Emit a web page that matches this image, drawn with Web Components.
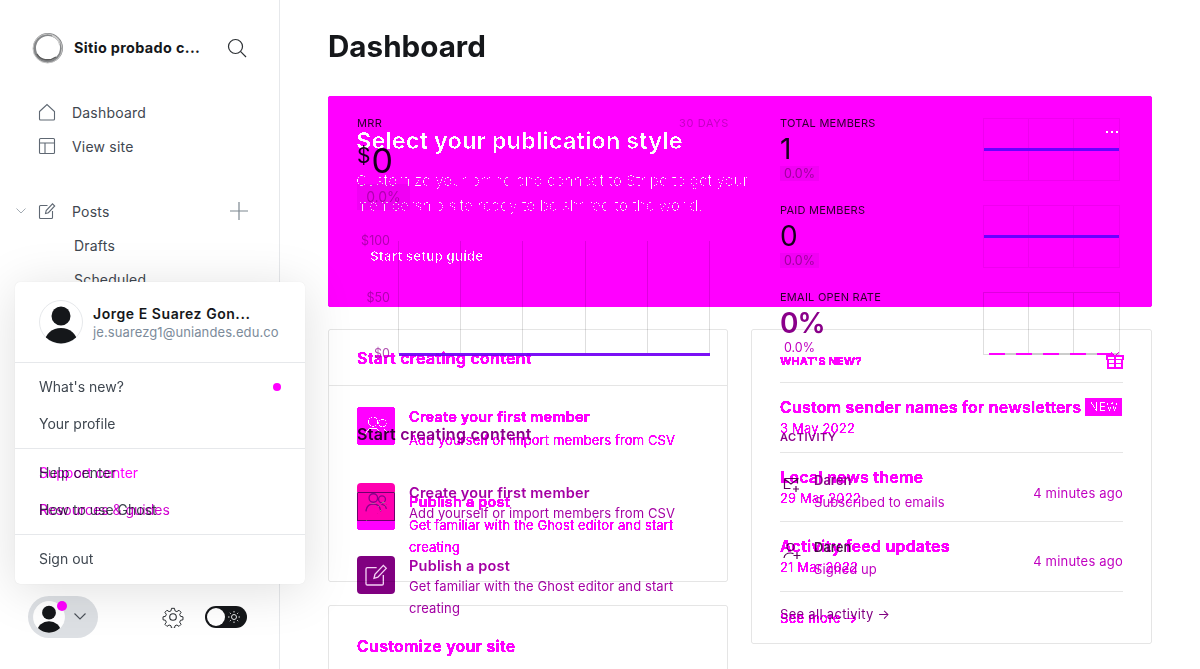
<!DOCTYPE html>
<html lang="en">
<head>
<meta charset="utf-8">
<title>Dashboard</title>
<style>
    html, body { margin: 0; height: 100%; background: #fff; overflow: hidden; }
    body { font-family: Inter, "Liberation Sans", sans-serif; display: flex; }
</style>
</head>
<body>
<side-bar></side-bar>
<main-stage></main-stage>

<script>
    const ICON = {
        home: '<path d="M1.5 8.5 9 1.5l7.5 7v7.5a1 1 0 0 1-1 1h-13a1 1 0 0 1-1-1z"/>',
        layout: '<rect x="1.5" y="1.5" width="15" height="15" rx="1"/><path d="M1.5 6h15M7 6v10.5"/>',
        edit: '<path d="M9.5 3.5H2.5a1 1 0 0 0-1 1v11a1 1 0 0 0 1 1h11a1 1 0 0 0 1-1V9"/><path d="M7.5 11.5l.7-3L14.5 1.8l2.2 2.2-6.3 6.7z"/>',
        members: '<circle cx="7" cy="6" r="3.2"/><circle cx="13.5" cy="7" r="2.6"/><path d="M1.5 16c.3-3.5 2.4-5.5 5.5-5.5s5.2 2 5.5 5.5M13 10.8c2 .1 3.400 1.400 3.800 3.400"/>',
        gift: '<rect x="1" y="5" width="16" height="3.500"/><rect x="2" y="8.500" width="14" height="8.500"/><path d="M9 5v12M2 12.500h14M9 5 5 1M9 5l4-4"/>',
        mail: '<path d="M1.500 3.500h13v5M1.500 3.500v10h6M1.500 4l6.500 5 6.500-5M13 11v6M10 14h6"/>',
        user: '<circle cx="7.500" cy="5" r="3.500"/><path d="M1 16c.5-3.500 3-5 6.500-5 1 0 2 .2 3 .6M14 10v7M10.500 13.500h7"/>'
    };
    const icon = (name, size, color, width) =>
        `<svg width="${size}" height="${size}" viewBox="0 0 18 18" fill="none" stroke="${color}" stroke-width="${width || 1.1}">${ICON[name]}</svg>`;
    const avatar = (size, ring) => `<svg width="${size}" height="${size}" viewBox="0 0 44 44" style="display:block">
        <defs><clipPath id="av"><circle cx="22" cy="22" r="21.500"/></clipPath></defs>
        <circle cx="22" cy="22" r="21.500" fill="#fff" stroke="${ring}"/>
        <g clip-path="url(#av)" fill="#15171a"><circle cx="22" cy="16" r="9.500"/><ellipse cx="22" cy="42" rx="16" ry="14"/></g></svg>`;

    class NavItem extends HTMLElement {
        constructor() {
            super();
            const name = this.getAttribute("icon");
            this.attachShadow({ mode: "open" }).innerHTML = `
                <style>
                    :host { display: flex; align-items: center; height: 34px; padding-left: 38px; font-size: 14px; letter-spacing: .2px; color: #3f4750; position: relative; }
                    .ic { width: 34px; height: 18px; flex: none; }
                    :host([sub]) { padding-left: 74px; }
                    ::slotted(svg) { position: absolute; }
                </style>
                ${name ? `<span class="ic">${icon(name, 18, "#5f6873")}</span>` : ""}
                <span><slot></slot></span><slot name="extra"></slot>`;
        }
    }
    customElements.define("nav-item", NavItem);

    class MenuRow extends HTMLElement {
        constructor() {
            super();
            this.attachShadow({ mode: "open" }).innerHTML = `
                <style>
                    :host { display: flex; align-items: center; height: 37px; padding: 0 24px; font-size: 14px; color: #3f4750; position: relative; }
                    .over { position: absolute; left: 24px; mix-blend-mode: multiply; white-space: nowrap; }
                </style>
                <slot></slot><span class="over"><slot name="over"></slot></span>`;
        }
    }
    customElements.define("menu-row", MenuRow);

    class UserMenu extends HTMLElement {
        constructor() {
            super();
            this.attachShadow({ mode: "open" }).innerHTML = `
                <style>
                    :host { display: block; position: absolute; left: 15px; top: 282px; width: 290px; background: #fff; border-radius: 5px;
                        box-shadow: 0 0 1px rgba(0,0,0,.12), 0 6px 50px rgba(0,0,0,.13); }
                    .head { display: flex; align-items: center; gap: 10px; height: 80px; padding-left: 24px; }
                    .name { font-size: 14px; font-weight: 600; letter-spacing: .55px; color: #15171a; line-height: 18px; margin-top: 2px; }
                    .mail { font-size: 13px; color: #7c8b9a; line-height: 18px; letter-spacing: .1px; }
                    .group { border-top: 1px solid #e6e8eb; padding: 5px 0 6px; }
                    .group:last-child { padding-bottom: 7px; }
                </style>
                <div class="head">${avatar(44, "#e6e8eb")}
                    <div><div class="name">Jorge E Suarez Gon...</div><div class="mail">je.suarezg1@uniandes.edu.co</div></div></div>
                <div class="group">
                    <menu-row>What's new?<span style="position:absolute;right:24px;width:8px;height:8px;border-radius:50%;background:#f0f"></span></menu-row>
                    <menu-row>Your profile</menu-row>
                </div>
                <div class="group">
                    <menu-row>Help center<span slot="over" style="color:#f0f">Support center</span></menu-row>
                    <menu-row>How to use Ghost<span slot="over" style="color:#d000d0">Resources &amp; guides</span></menu-row>
                </div>
                <div class="group"><menu-row>Sign out</menu-row></div>`;
        }
    }
    customElements.define("user-menu", UserMenu);

    class SideBar extends HTMLElement {
        constructor() {
            super();
            this.attachShadow({ mode: "open" }).innerHTML = `
                <style>
                    :host { display: flex; flex-direction: column; width: 280px; height: 669px; box-sizing: border-box; border-right: 1px solid #e6e8eb;
                        background: #fff; flex: none; position: relative; z-index: 2; }
                    .brand { display: flex; align-items: center; height: 95px; padding-left: 32px; }
                    .brand b { font-size: 14.400px; font-weight: 700; letter-spacing: .35px; color: #15171a; width: 128px; margin-left: 10px; white-space: nowrap; }
                    .search { margin-left: 25px; display: block; }
                    .gap { height: 31px; }
                    .foot { margin-top: auto; display: flex; align-items: center; padding: 0 0 31px 28px; }
                    .pill { width: 70px; height: 42px; border-radius: 21px; background: #dde0e4; position: relative; box-sizing: border-box; padding: 5px 0 0 5px; }
                    .badge { position: absolute; left: 29px; top: 5px; width: 10px; height: 10px; border-radius: 50%; background: #f0f; }
                    .chev { position: absolute; left: 46px; top: 17px; }
                    .gear { margin-left: 64px; display: block; }
                    .toggle { margin-left: 21px; width: 42px; height: 22px; border-radius: 11px; background: #15171a; position: relative; }
                    .knob { position: absolute; left: 2px; top: 2px; width: 18px; height: 18px; border-radius: 50%; background: #fff; }
                    .sun { position: absolute; left: 23px; top: 5px; }
                </style>
                <div class="brand">
                    <svg width="32" height="32" viewBox="0 0 32 32" fill="none">
                        <circle cx="16" cy="16" r="13.500" stroke="#858789" stroke-width="3"/>
                        <circle cx="15.500" cy="16.500" r="14.500" stroke="#c4c4c4" stroke-width="1"/>
                        <path d="M5 22c3 6 12 8 19 3" stroke="#5c5c5c" stroke-width="1.500"/>
                        <path d="M20 3.500c4 1.500 7 5 7.500 9" stroke="#d0d0d0" stroke-width="1.500"/>
                    </svg>
                    <b>Sitio probado c...</b>
                    <svg class="search" width="20" height="20" viewBox="0 0 20 20" fill="none" stroke="#2b2f33" stroke-width="1.200">
                        <circle cx="8.500" cy="8.500" r="7"/><path d="M13.700 13.700 19 19"/></svg>
                </div>
                <nav-item icon="home">Dashboard</nav-item>
                <nav-item icon="layout">View site</nav-item>
                <div class="gap"></div>
                <nav-item icon="edit">Posts
                    <svg slot="extra" style="left:16px;top:14px" width="10" height="6" viewBox="0 0 10 6" fill="none" stroke="#a3abb3" stroke-width="1"><path d="M.5.500 5 5 9.500.500"/></svg>
                    <svg slot="extra" style="left:230px;top:8px" width="18" height="18" viewBox="0 0 18 18" fill="none" stroke="#7c8790" stroke-width="1.200"><path d="M9 0v18M0 9h18"/></svg>
                </nav-item>
                <nav-item sub>Drafts</nav-item>
                <nav-item sub>Scheduled</nav-item>
                <div class="foot">
                    <div class="pill">${avatar(32, "#fff")}<span class="badge"></span>
                        <svg class="chev" width="12" height="7" viewBox="0 0 12 7" fill="none" stroke="#4a5058" stroke-width="1.100"><path d="M.5.500 6 6 11.500.500"/></svg></div>
                    <svg class="gear" width="22" height="22" viewBox="0 0 24 24" fill="none" stroke="#2b2f33" stroke-width="1.200">
                        <circle cx="12" cy="12" r="3.600"/>
                        <path d="M10.200 1.500h3.600l.6 3 2.300 1 2.600-1.700 2.500 2.500-1.700 2.600 1 2.300 3 .6v3.600l-3 .6-1 2.300 1.700 2.600-2.500 2.500-2.600-1.700-2.300 1-.6 3h-3.600l-.6-3-2.300-1-2.600 1.700-2.500-2.500 1.700-2.600-1-2.300-3-.6v-3.600l3-.6 1-2.300-1.700-2.600 2.500-2.500 2.600 1.700 2.300-1z" transform="translate(1.200 1.200) scale(.9)"/>
                    </svg>
                    <div class="toggle"><span class="knob"></span>
                        <svg class="sun" width="12" height="12" viewBox="0 0 12 12" fill="none" stroke="#e8e8e8" stroke-width="1"><circle cx="6" cy="6" r="2.500"/><path d="M6 0v1.500M6 10.500V12M0 6h1.500M10.500 6H12M1.800 1.800l1 1M9.200 9.200l1 1M1.800 10.200l1-1M9.200 2.800l1-1"/></svg></div>
                </div>
                <user-menu></user-menu>`;
        }
    }
    customElements.define("side-bar", SideBar);

    class StatRow extends HTMLElement {
        constructor() {
            super();
            const dashed = this.hasAttribute("dashed");
            this.attachShadow({ mode: "open" }).innerHTML = `
                <style>
                    :host { display: flex; justify-content: space-between; height: 87px; }
                    .lab { font-size: 11px; line-height: 14px; letter-spacing: .25px; color: #2b1a2b; }
                    .num { font-size: 28px; line-height: 32px; margin-top: 3px; color: var(--num, #15171a); font-weight: var(--w, 400); letter-spacing: var(--ls, 0); }
                    .pct { display: inline-block; font-size: 12.500px; line-height: 15px; padding: 0 4px; margin-top: 1px; background: var(--pbg, #f1f3f4); color: var(--pc, #a0a0a0); vertical-align: top; }
                    .spark { width: 137px; height: 63px; margin: 2px 3px 0 0; box-sizing: border-box; border: 1px solid var(--grid, #efefef); display: grid; grid-template-columns: repeat(3, 1fr); position: relative; }
                    .spark i { border-right: 1px solid var(--grid, #efefef); }
                    .spark i:last-of-type { border: 0; }
                    .line { position: absolute; left: 0; right: 0; top: 29px; height: 3px; background: #6a10ff; }
                    .dash { position: absolute; left: 5px; right: 0; bottom: -1px; height: 2px; background: repeating-linear-gradient(90deg, #f0f 0 16px, #ccc 16px 27px); }
                </style>
                <div><div class="lab">${this.getAttribute("label")}</div>
                    <div class="num">${this.getAttribute("value")}</div>
                    <span class="pct">0.0%</span></div>
                <div class="spark"><i></i><i></i><i></i>${dashed ? '<b class="dash"></b>' : '<b class="line"></b>'}</div>`;
        }
    }
    customElements.define("stat-row", StatRow);

    class MrrChart extends HTMLElement {
        constructor() {
            super();
            this.attachShadow({ mode: "open" }).innerHTML = `
                <style>
                    :host { display: flex; margin-top: 31px; }
                    .axis { width: 33px; height: 127px; margin-top: -7px; display: flex; flex-direction: column; justify-content: space-between; align-items: flex-end; font-size: 12.500px; line-height: 14px; color: #b050b0; }
                    .plot { margin-left: 8px; width: 312px; height: 113px; box-sizing: border-box; display: grid; grid-template-columns: repeat(5, 1fr); border-left: 1px solid #dedede; position: relative; }
                    .plot i { border-right: 1px solid #dedede; }
                    .plot b { position: absolute; left: 0; right: 0; bottom: -2px; height: 3px; background: #7b10f5; }
                </style>
                <div class="axis"><span>$100</span><span>$50</span><span>$0</span></div>
                <div class="plot"><i></i><i></i><i></i><i></i><i></i><b></b></div>`;
        }
    }
    customElements.define("mrr-chart", MrrChart);

    class StepRow extends HTMLElement {
        constructor() {
            super();
            const bg = this.getAttribute("bg");
            this.attachShadow({ mode: "open" }).innerHTML = `
                <style>
                    :host { display: flex; gap: 14px; color: var(--c, #15171a); }
                    .tile { width: 38px; height: 38px; border-radius: 4px; flex: none; background: ${bg}; display: flex; align-items: center; justify-content: center; position: relative; }
                    h4 { margin: 0; font-size: 14.500px; line-height: 20px; font-weight: 600; letter-spacing: .2px; }
                    p { margin: var(--pm, -1px) 0 0; font-size: 13px; line-height: 22px; letter-spacing: .1px; width: 290px; color: var(--dc, inherit); }
                    ::slotted(i) { position: absolute; left: 0; right: 0; top: 9px; bottom: 0; border: 1px solid #6e6e6e; box-sizing: border-box; }
                </style>
                <div class="tile"><slot name="icon"></slot></div>
                <div><h4>${this.getAttribute("title")}</h4><p><slot></slot></p></div>`;
        }
    }
    customElements.define("step-row", StepRow);

    class ActRow extends HTMLElement {
        constructor() {
            super();
            this.attachShadow({ mode: "open" }).innerHTML = `
                <style>
                    :host { display: flex; height: 42px; margin-bottom: 25px; color: #c000c0; }
                    .ic { width: 34px; padding-left: 3px; box-sizing: border-box; padding-top: 5px; flex: none; }
                    .n { font-size: 13px; font-weight: 600; line-height: 20px; color: var(--n, #8a008a); }
                    .s { font-size: 13px; line-height: 22px; letter-spacing: .1px; margin-top: 1px; }
                    .t { margin-left: auto; font-size: 13px; letter-spacing: .2px; line-height: 20px; margin-top: var(--t, 13px); }
                </style>
                <div class="ic"><slot name="icon"></slot></div>
                <div><div class="n">Daren</div><div class="s"><slot></slot></div></div>
                <div class="t">4 minutes ago</div>`;
        }
    }
    customElements.define("act-row", ActRow);

    class DashLayer extends HTMLElement {
        constructor() {
            super();
            this.attachShadow({ mode: "open" }).innerHTML = `
                <style>
                    :host { display: block; grid-area: 1 / 1; padding: 0 48px; background: #fff; }
                    h1 { margin: 0; height: 96px; box-sizing: border-box; padding-top: 26px; font-size: 29.600px; line-height: 40px; font-weight: 700; color: #15171a; }
                    .top { display: grid; grid-template-columns: 372px 343px; column-gap: 51px; padding: 20px 0 0 29px; height: 311px; box-sizing: border-box; }
                    .lab { display: flex; justify-content: space-between; font-size: 11px; line-height: 14px; letter-spacing: .4px; color: #2b1a2b; }
                    .days { color: #c400c4; letter-spacing: .6px; }
                    .val { height: 40px; margin-top: 11px; font-size: 34px; line-height: 40px; color: #15171a; display: flex; }
                    .val sup { font-size: 21px; line-height: 30px; margin-right: 1px; }
                    .pct { display: inline-block; height: 26px; width: 53px; line-height: 26px; margin-top: 3px; text-align: center; font-size: 14px; background: #f1f3f4; color: #b070b0; vertical-align: top; }
                    .bot { display: grid; grid-template-columns: 372px 343px; column-gap: 51px; padding-left: 29px; }
                    h3 { margin: 17px 0 39px; font-size: 16px; line-height: 20px; font-weight: 600; letter-spacing: .27px; color: #8a008a; }
                    h3 span { color: #2e2e2e; }
                    .steps { display: flex; flex-direction: column; gap: 32px; --c: #a400a4; }
                    h5 { margin: 23px 0 26px; font-size: 11px; line-height: 14px; font-weight: 600; letter-spacing: .5px; color: #8a008a; }
                    .all { font-size: 13px; line-height: 20px; letter-spacing: .3px; color: #800080; margin-top: 4px; }
                </style>
                <h1>Dashboard</h1>
                <div class="top">
                    <div>
                        <div class="lab"><span>MRR</span><span class="days">30 DAYS</span></div>
                        <div class="val"><sup>$</sup>0</div>
                        <span class="pct">0.0%</span>
                        <mrr-chart></mrr-chart>
                    </div>
                    <div>
                        <stat-row label="TOTAL MEMBERS" value="1"></stat-row>
                        <stat-row label="PAID MEMBERS" value="0"></stat-row>
                        <stat-row dashed label="EMAIL OPEN RATE" value="0%" style="--num:#8a008a;--w:600;--ls:-1px;--pbg:#fff;--pc:#c000c0;--grid:#dedede"></stat-row>
                    </div>
                </div>
                <div class="bot">
                    <div>
                        <h3><span>Start</span> creating content</h3>
                        <div class="steps">
                            <step-row bg="#ff00b0" title="Create your first member">
                                <i slot="icon"></i>
                                <svg slot="icon" width="24" height="24" viewBox="0 0 18 18" fill="none" stroke="#8a8a8a" stroke-width="1">${ICON.members}</svg>
                                Add yourself or import members from CSV</step-row>
                            <step-row bg="#800080" title="Publish a post">
                                <svg slot="icon" width="24" height="24" viewBox="0 0 18 18" fill="none" stroke="#f4d0f4" stroke-width="1">${ICON.edit}</svg>
                                Get familiar with the Ghost editor and start creating</step-row>
                        </div>
                    </div>
                    <div>
                        <h5>ACTIVITY</h5>
                        <act-row><span slot="icon">${icon("mail", 18, "#5a005a", 1.2)}</span>Subscribed to emails</act-row>
                        <act-row style="--t:14px;--n:#4a1a4a"><span slot="icon">${icon("user", 18, "#5a005a", 1.2)}</span>Signed up</act-row>
                        <div class="all">See all activity &rarr;</div>
                    </div>
                </div>`;
        }
    }
    customElements.define("dash-layer", DashLayer);

    class NewsRow extends HTMLElement {
        constructor() {
            super();
            this.attachShadow({ mode: "open" }).innerHTML = `
                <style>
                    :host { display: block; height: 69.500px; box-sizing: border-box; border-top: 1px solid #e6e6e6; padding-top: 14px; }
                    .t { display: flex; align-items: center; font-size: 16px; line-height: 20px; font-weight: 600; letter-spacing: .22px; color: #3a4047; white-space: nowrap; }
                    .d { font-size: 13px; line-height: 20px; letter-spacing: .15px; margin-top: 1px; color: #a5aeb7; }
                    ::slotted(span) { margin-left: 4px; background: #15171a; color: #fff; font-size: 12px; font-weight: 500; line-height: 18px; padding: 0 4px; border-radius: 2px; letter-spacing: .2px; }
                </style>
                <div class="t">${this.getAttribute("title")}<slot></slot></div>
                <div class="d">${this.getAttribute("date")}</div>`;
        }
    }
    customElements.define("news-row", NewsRow);

    class GuideLayer extends HTMLElement {
        constructor() {
            super();
            // everything that is not close to white turns magenta, the light greys stay as they are
            const low = v => Array(22).fill(v).join(" ");
            this.attachShadow({ mode: "open" }).innerHTML = `
                <style>
                    :host { display: block; grid-area: 1 / 1; mix-blend-mode: multiply; min-width: 0; }
                    .layer { filter: url(#diff); background: #fff; padding: 96px 48px 0; height: 669px; box-sizing: border-box; overflow: hidden; }
                    .banner { height: 211px; box-sizing: border-box; background: #15171a; border-radius: 3px; padding: 28px 28px 0; position: relative; color: #fff; }
                    .banner h2 { margin: 0; font-size: 23.500px; line-height: 34px; font-weight: 700; }
                    .banner p { margin: 10px 0 0; font-size: 15px; line-height: 25px; letter-spacing: .1px; color: #fff; font-weight: 300; white-space: nowrap; }
                    .banner a { display: inline-block; margin: 28px 0 0 14px; font-size: 13.500px; line-height: 20px; font-weight: 700; }
                    .more { position: absolute; right: 34px; top: 35px; display: block; }
                    .cols { display: grid; grid-template-columns: 400px 401px; column-gap: 23px; margin-top: 22px; }
                    .card { border: 1px solid #e6e6e6; border-radius: 3px; box-sizing: border-box; }
                    .card h3 { margin: 0; padding: 18px 28px 17px; font-size: 16px; line-height: 20px; font-weight: 600; letter-spacing: .27px; color: #3a4047; border-bottom: 1px solid #e6e6e6; }
                    .c1 { height: 253px; }
                    .c2 { margin-top: 23px; height: 100px; }
                    .c2 h3 { border: 0; padding-top: 30px; }
                    .steps { padding: 21px 28px 0; display: flex; flex-direction: column; gap: 41px; --pm: 2px; --dc: #7a838c; --c: #3a4047; }
                    .c3 { height: 315px; padding: 0 28px; }
                    .nh { height: 52px; display: flex; justify-content: space-between; align-items: flex-start; padding-top: 24px; box-sizing: border-box; font-size: 11px; line-height: 14px; font-weight: 700; letter-spacing: .1px; color: #3a4047; }
                    .nh svg { margin: -3px -1px 0 0; }
                    .see { border-top: 1px solid #e6e6e6; padding-top: 16px; font-size: 13px; line-height: 20px; letter-spacing: .3px; color: #3a4047; }
                </style>
                <svg width="0" height="0" style="position:absolute">
                    <filter id="diff" color-interpolation-filters="sRGB" x="0" y="0" width="100%" height="100%">
                        <feColorMatrix type="matrix" values="0 1 0 0 0  0 1 0 0 0  0 1 0 0 0  0 0 0 1 0"/>
                        <feComponentTransfer>
                            <feFuncR type="discrete" tableValues="${low(1)} .9 .94 1"/>
                            <feFuncG type="discrete" tableValues="${low(0)} .9 .94 1"/>
                            <feFuncB type="discrete" tableValues="${low(1)} .9 .94 1"/>
                        </feComponentTransfer>
                    </filter>
                </svg>
                <div class="layer">
                    <div class="banner">
                        <h2>Select your publication style</h2>
                        <p>Customize your brand and connect to Stripe to get your<br>membership site ready to be shared to the world.</p>
                        <a>Start setup guide</a>
                        <svg class="more" width="12" height="2" viewBox="0 0 12 2" fill="#fff"><rect width="2" height="2"/><rect x="5" width="2" height="2"/><rect x="10" width="2" height="2"/></svg>
                    </div>
                    <div class="cols">
                        <div>
                            <div class="card c1">
                                <h3>Start creating content</h3>
                                <div class="steps">
                                    <step-row bg="#15171a" title="Create your first member">
                                        <svg slot="icon" width="26" height="26" viewBox="0 0 18 18" fill="none" stroke="#fff" stroke-width="1">${ICON.members}</svg>
                                        Add yourself or import members from CSV</step-row>
                                    <step-row bg="#15171a" title="Publish a post">
                                        <svg slot="icon" width="24" height="24" viewBox="0 0 18 18" fill="none" stroke="#fff" stroke-width="1">${ICON.edit}</svg>
                                        Get familiar with the Ghost editor and start creating</step-row>
                                </div>
                            </div>
                            <div class="card c2"><h3>Customize your site</h3></div>
                        </div>
                        <div class="card c3">
                            <div class="nh">WHAT'S NEW?
                                <svg width="18" height="18" viewBox="0 0 18 18" fill="none" stroke="#15171a" stroke-width="1">${ICON.gift}</svg></div>
                            <news-row title="Custom sender names for newsletters" date="3 May 2022"><span>NEW</span></news-row>
                            <news-row title="Local news theme" date="29 Mar 2022"></news-row>
                            <news-row title="Activity feed updates" date="21 Mar 2022"></news-row>
                            <div class="see">See more &rarr;</div>
                        </div>
                    </div>
                </div>`;
        }
    }
    customElements.define("guide-layer", GuideLayer);

    class MainStage extends HTMLElement {
        constructor() {
            super();
            this.attachShadow({ mode: "open" }).innerHTML = `
                <style>
                    :host { display: grid; flex: 1; min-width: 0; height: 669px; overflow: hidden; }
                </style>
                <dash-layer></dash-layer>
                <guide-layer></guide-layer>`;
        }
    }
    customElements.define("main-stage", MainStage);
</script>
</body>
</html>
